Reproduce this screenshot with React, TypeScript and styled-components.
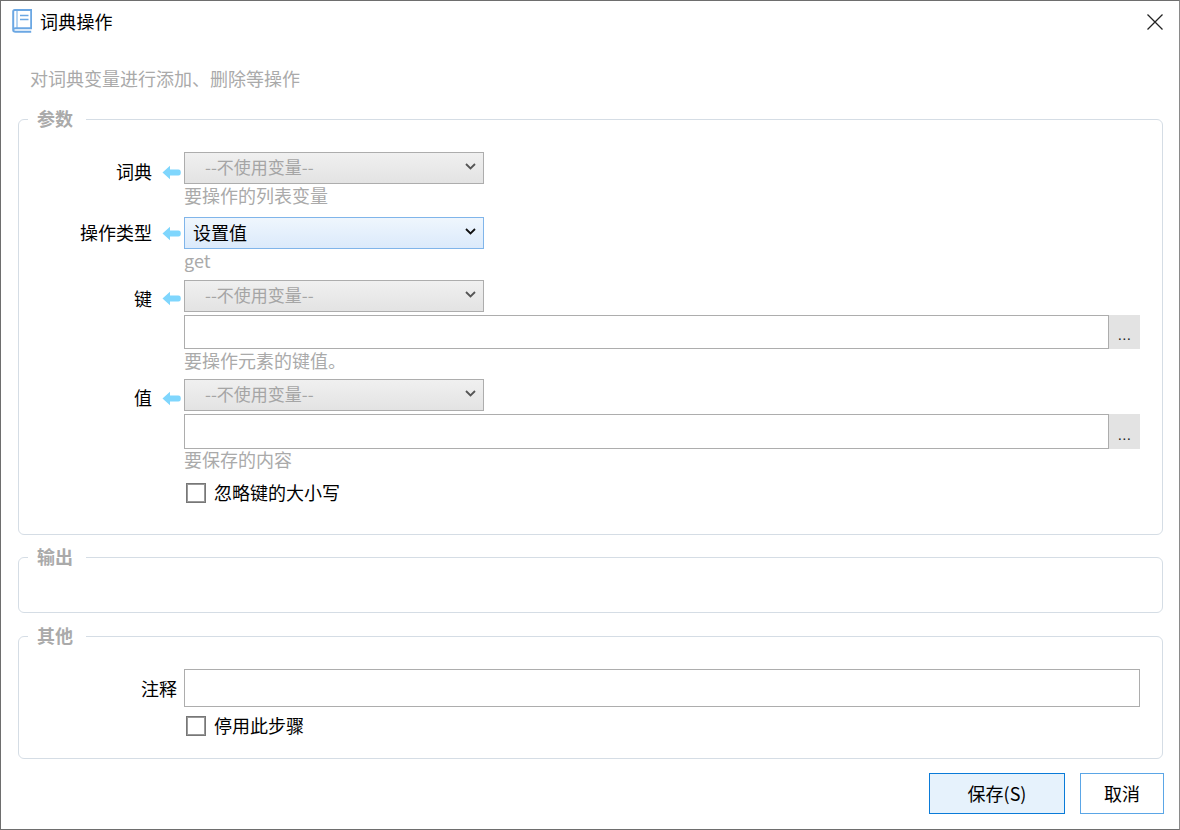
import React from "react";
import styled, { createGlobalStyle } from "styled-components";

const Global = createGlobalStyle`
  html, body { margin: 0; padding: 0; background: #fff; }
  * { box-sizing: border-box; }
  body { font-family: "Noto Sans CJK SC", "Noto Sans", sans-serif; font-size: 18px; color: #000; }
`;

const Window = styled.div`
  width: 1180px; height: 830px; border: 1px solid #6e6e6e; border-right-color: #8a8a8a;
  background: #fff; display: flex; flex-direction: column; overflow: hidden;
`;
const TitleBar = styled.header`
  height: 43px; flex: none; display: flex; align-items: center; padding: 0 15px 4px 11px; gap: 8px;
`;
const Title = styled.h1`
  margin: 0; font-size: 18px; font-weight: 400; line-height: 24px; flex: 1; letter-spacing: 0.2px;
`;
const CloseButton = styled.button`
  border: 0; background: none; padding: 0; margin-top: 2px; width: 18px; height: 18px; display: flex; color: #222;
`;
const Description = styled.p`
  margin: 0; padding: 22px 0 0 29px; height: 62px; font-size: 18px; line-height: 24px; color: #aaa;
`;
const Content = styled.main`
  flex: 1; display: flex; flex-direction: column; padding: 0 17px;
`;
const Group = styled.fieldset<{ $h: number; $gap?: number }>`
  margin: ${p => p.$gap ?? 0}px 0 0; padding: 0; height: ${p => p.$h}px; min-inline-size: 0; width: 1145px;
  border: 1px solid #d5dde5; border-radius: 6px;
`;
const GroupTitle = styled.legend`
  margin-left: 9px; padding: 0 13px 3px 9px; font-size: 18px; font-weight: 700; line-height: 24px; color: #aaa;
`;
const Form = styled.div`
  display: grid; grid-template-columns: 133px 32px 956px; padding-top: 19px;
`;
const Label = styled.label<{ $top: number }>`
  grid-column: 1; text-align: right; font-size: 18px; line-height: 24px; height: 32px; padding-top: ${p => p.$top}px; white-space: nowrap;
`;
const ArrowCell = styled.span<{ $top: number }>`
  grid-column: 2; height: 32px; padding: ${p => p.$top}px 0 0 10px; display: block;
`;
const Field = styled.div`
  grid-column: 3; display: flex; flex-direction: column;
`;
const SelectWrap = styled.div`
  position: relative; width: 300px; height: 32px;
`;
const Select = styled.select<{ $active?: boolean }>`
  appearance: none; width: 100%; height: 100%; outline: 0; font-family: inherit; line-height: 24px; opacity: 1;
  font-size: ${p => (p.$active ? 18 : 17)}px;
  border: 1px solid ${p => (p.$active ? "#80b5ea" : "#adadad")};
  color: ${p => (p.$active ? "#000" : "#a5a5a5")};
  padding: 0 0 ${p => (p.$active ? 2 : 3)}px ${p => (p.$active ? 8 : 20)}px;
  background: ${p => (p.$active ? "linear-gradient(#eff6fd, #dbeafb)" : "linear-gradient(#f0f0f0, #e3e3e3)")};
`;
const Chevron = styled.svg`
  position: absolute; right: 8px; top: 11px; width: 11px; height: 7px; pointer-events: none;
`;
const Hint = styled.div<{ $h: number; $lh?: number }>`
  height: ${p => p.$h}px; font-size: 18px; line-height: ${p => p.$lh ?? 22}px; color: #aaa;
`;
const InputRow = styled.div`
  display: flex; width: 956px; margin-top: 3px;
`;
const TextInput = styled.input<{ $h?: number }>`
  flex: 1; min-width: 0; height: ${p => p.$h ?? 34}px; border: 1px solid #adadad; background: #fff; outline: 0;
  font-family: inherit; font-size: 18px; padding: 0 6px;
`;
const MoreButton = styled.button`
  width: 31px; border: 0; background: #e3e3e3; font-family: "Liberation Sans", sans-serif; font-size: 15px; letter-spacing: 0.4px; padding: 5px 0 0; color: #222;
`;
const CheckLine = styled.label<{ $top: number }>`
  display: flex; align-items: center; gap: 8px; height: 24px; margin-top: ${p => p.$top}px; padding-left: 2px; font-size: 18px; line-height: 24px;
`;
const Check = styled.input`
  appearance: none; margin: 2px 0 0; width: 20px; height: 20px; border: 1px solid #777; box-shadow: inset 0 0 0 1px #999; background: #fff; flex: none;
`;
const Note = styled.div`
  display: grid; grid-template-columns: 165px 956px; row-gap: 6px; padding-top: 19px;
`;
const NoteLabel = styled.label`
  text-align: right; padding: 7px 7px 0 0; line-height: 24px;
`;
const Footer = styled.footer`
  display: flex; justify-content: flex-end; gap: 15px; padding: 14px 0 0; margin-right: -2px;
`;
const Button = styled.button<{ $primary?: boolean }>`
  height: 41px; width: ${p => (p.$primary ? 136 : 84)}px; font-family: inherit; font-size: 18px; color: #000; padding: 0 0 1px;
  border: 1px solid ${p => (p.$primary ? "#0a7bd8" : "#5ba6e6")};
  background: ${p => (p.$primary ? "#e6f2fc" : "#fff")};
`;

const Arrow = () => (
  <svg width="19" height="15" viewBox="0 0 19 15" style={{ display: "block" }}>
    <path d="M0.5 7.5 L8 0.8 V4.6 H16.5 Q18.8 4.6 18.8 7.5 Q18.8 10.4 16.5 10.4 H8 V14.2 Z" fill="#7fd6fd" />
  </svg>
);
const Chev = ({ active }: { active?: boolean }) => (
  <Chevron viewBox="0 0 11 7">
    <path d="M1 1 L5.5 5.5 L10 1" fill="none" stroke={active ? "#111" : "#555"} strokeWidth="1.8" />
  </Chevron>
);
const BookIcon = () => (
  <svg width="20" height="24" viewBox="0 0 20 24" style={{ flex: "none" }}>
    <g fill="none" stroke="#6ba7e3">
      <path d="M1.2 21 V2.5 Q1.2 1 2.8 1 H19.2 V19.3 H3.5 Q1.2 19.3 1.2 21 Q1.2 22.8 3.5 22.8 H19.2" strokeWidth="2" />
      <path d="M5 1 V19" strokeWidth="1" />
      <path d="M8 6.5 H16.5 M8 10.5 H16.5" strokeWidth="1.4" />
    </g>
  </svg>
);

const VarSelect = () => (
  <SelectWrap>
    <Select disabled defaultValue="none"><option value="none">--不使用变量--</option></Select>
    <Chev />
  </SelectWrap>
);

export default function App() {
  return (
    <Window>
      <Global />
      <TitleBar>
        <BookIcon />
        <Title>词典操作</Title>
        <CloseButton aria-label="关闭">
          <svg width="18" height="18" viewBox="0 0 18 18"><path d="M1.5 1.5 L16.5 16.5 M16.5 1.5 L1.5 16.5" stroke="#222" strokeWidth="1.3" /></svg>
        </CloseButton>
      </TitleBar>
      <Description>对词典变量进行添加、删除等操作</Description>
      <Content>
        <Group $h={429}>
          <GroupTitle>参数</GroupTitle>
          <Form>
            <Label $top={7}>词典</Label>
            <ArrowCell $top={13}><Arrow /></ArrowCell>
            <Field>
              <VarSelect />
              <Hint $h={33}>要操作的列表变量</Hint>
            </Field>
            <Label $top={3}>操作类型</Label>
            <ArrowCell $top={9}><Arrow /></ArrowCell>
            <Field>
              <SelectWrap>
                <Select $active defaultValue="set"><option value="set">设置值</option></Select>
                <Chev active />
              </SelectWrap>
              <Hint $h={31}>get</Hint>
            </Field>
            <Label $top={6}>键</Label>
            <ArrowCell $top={11}><Arrow /></ArrowCell>
            <Field>
              <VarSelect />
              <InputRow><TextInput /><MoreButton>...</MoreButton></InputRow>
              <Hint $h={30}>要操作元素的键值。</Hint>
            </Field>
            <Label $top={6}>值</Label>
            <ArrowCell $top={12}><Arrow /></ArrowCell>
            <Field>
              <VarSelect />
              <InputRow><TextInput $h={35} /><MoreButton>...</MoreButton></InputRow>
              <Hint $h={24} $lh={20}>要保存的内容</Hint>
              <CheckLine $top={7}><Check type="checkbox" />忽略键的大小写</CheckLine>
            </Field>
          </Form>
        </Group>
        <Group $h={69} $gap={9}>
          <GroupTitle>输出</GroupTitle>
        </Group>
        <Group $h={136} $gap={10}>
          <GroupTitle>其他</GroupTitle>
          <Note>
            <NoteLabel>注释</NoteLabel>
            <TextInput $h={38} />
            <span />
            <CheckLine $top={0}><Check type="checkbox" />停用此步骤</CheckLine>
          </Note>
        </Group>
        <Footer>
          <Button $primary>保存(S)</Button>
          <Button>取消</Button>
        </Footer>
      </Content>
    </Window>
  );
}
